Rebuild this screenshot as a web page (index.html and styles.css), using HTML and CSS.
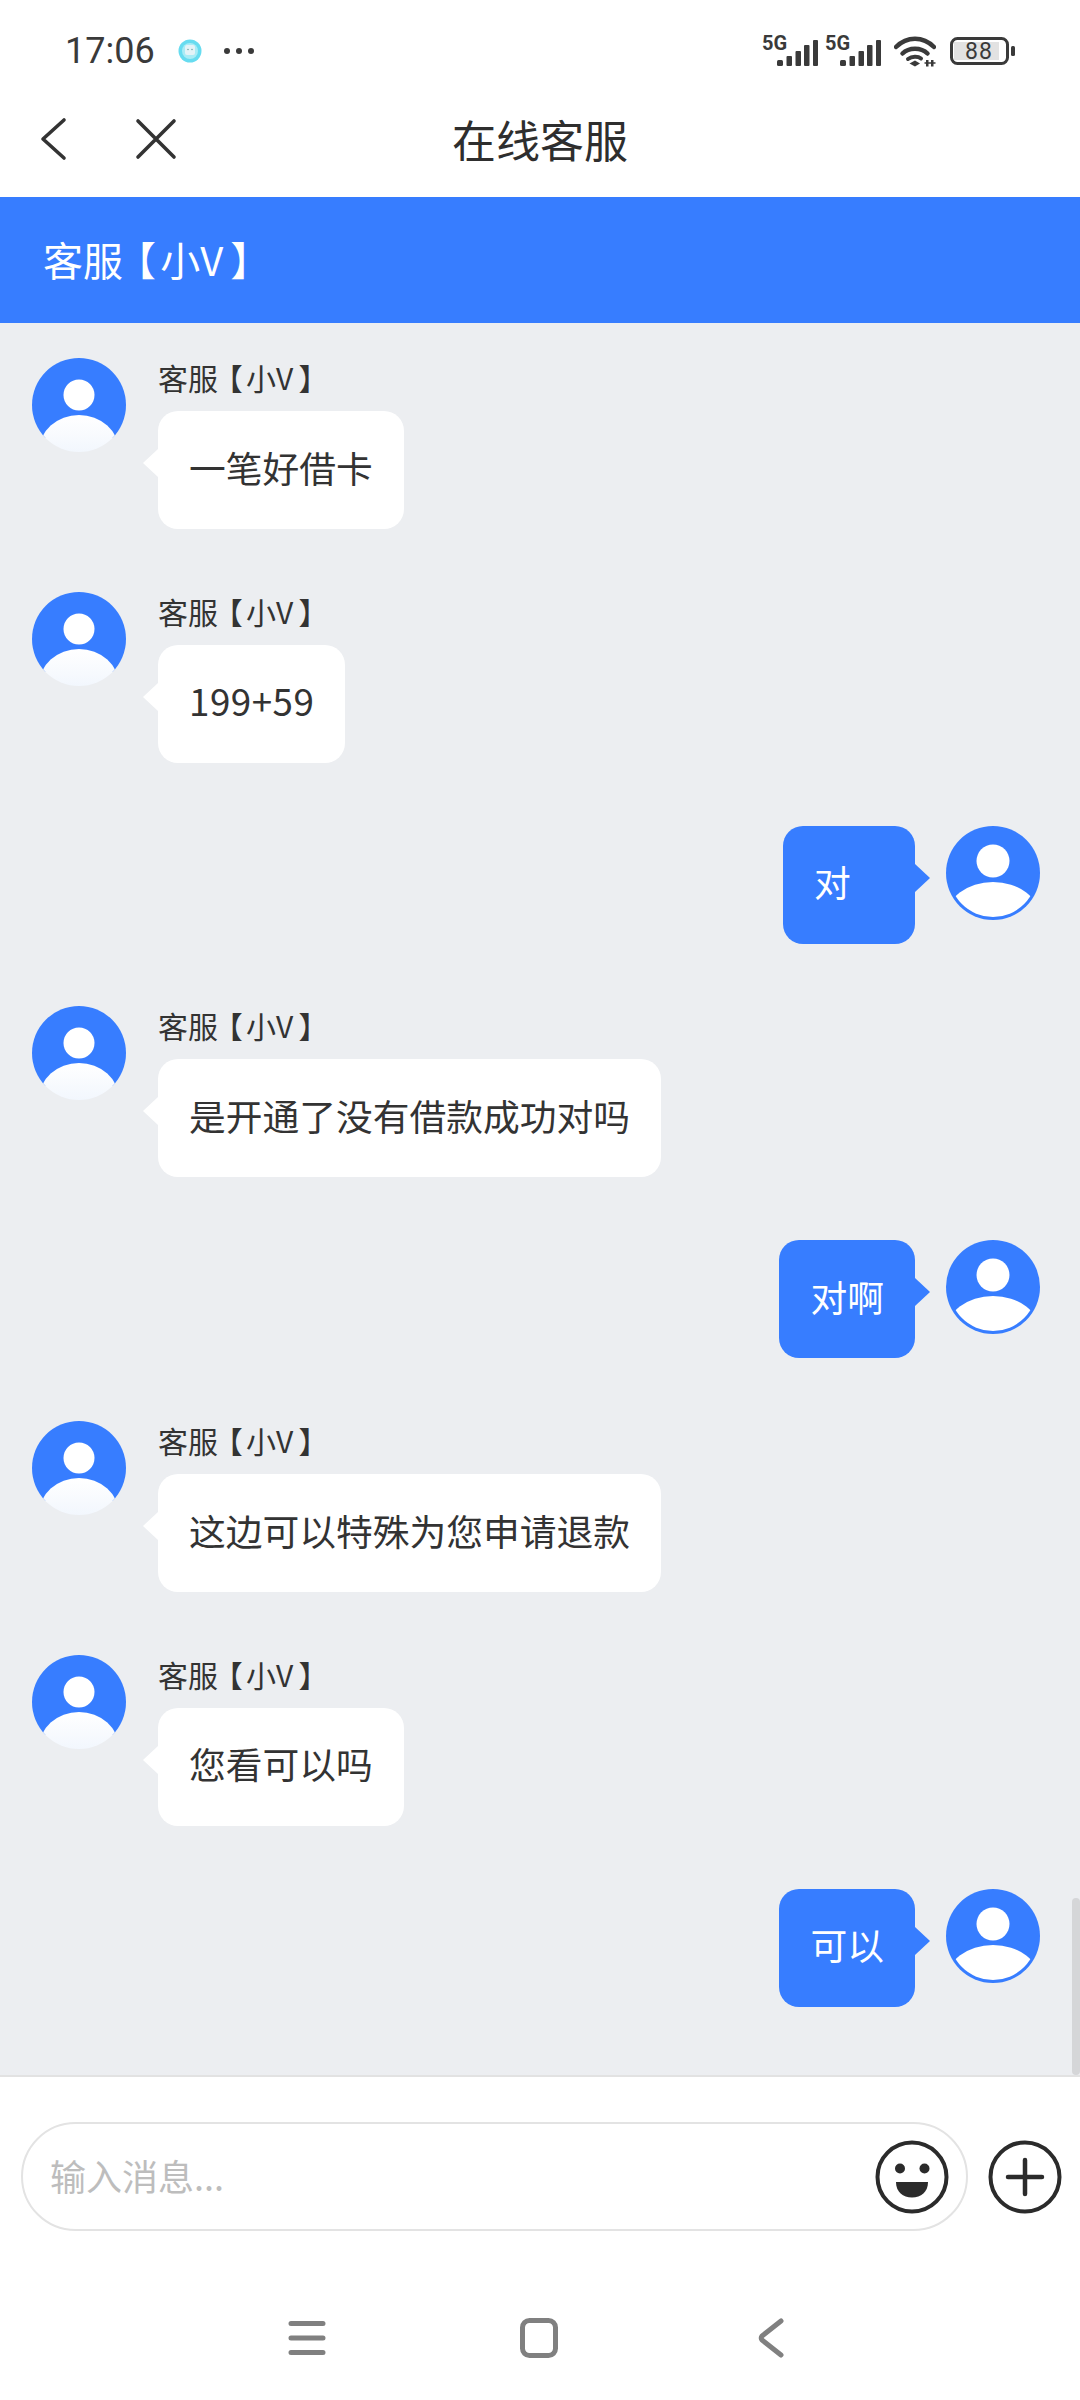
FILE: index.html
```html
<!DOCTYPE html>
<html lang="zh-CN">
<head>
<meta charset="utf-8">
<title>在线客服</title>
<link rel="stylesheet" href="styles.css">
</head>
<body>
<svg class="defs" width="0" height="0" aria-hidden="true">
  <defs>
    <linearGradient id="fade" x1="0" y1="0" x2="0" y2="1">
      <stop offset="0" stop-color="#ffffff"/>
      <stop offset="1" stop-color="#e6effc"/>
    </linearGradient>
    <clipPath id="clipOuter"><circle cx="47" cy="47" r="47"/></clipPath>
    <clipPath id="clipTop"><rect x="0" y="0" width="94" height="80"/></clipPath>
    <clipPath id="clipInner"><circle cx="47" cy="47" r="44"/></clipPath>
    <symbol id="agent" viewBox="0 0 94 94">
      <circle cx="47" cy="47" r="47" fill="#377dff" clip-path="url(#clipTop)"/>
      <circle cx="47" cy="37" r="15.5" fill="#fff"/>
      <ellipse cx="47" cy="93" rx="40" ry="36" fill="url(#fade)" clip-path="url(#clipOuter)"/>
    </symbol>
    <symbol id="user" viewBox="0 0 94 94">
      <circle cx="47" cy="47" r="47" fill="#377dff"/>
      <circle cx="47" cy="35" r="16.5" fill="#fff"/>
      <ellipse cx="47" cy="92" rx="47" ry="36" fill="#fff" clip-path="url(#clipInner)"/>
    </symbol>
    <symbol id="signal" viewBox="0 0 57 32">
      <text x="0" y="15" class="sig-text">5G</text>
      <rect x="15" y="25" width="6" height="6" rx="1.5" fill="#3a3a3a"/>
      <rect x="24.5" y="21" width="5.5" height="10" rx="1" fill="#3a3a3a"/>
      <rect x="33.5" y="16" width="5.5" height="15" rx="1" fill="#3a3a3a"/>
      <rect x="42" y="10" width="5.5" height="21" rx="1" fill="#3a3a3a"/>
      <rect x="51" y="5" width="5" height="26" rx="1" fill="#3a3a3a"/>
    </symbol>
  </defs>
</svg>

<div class="status">
  <span class="time">17:06</span>
  <svg class="app-dot" width="24" height="24" viewBox="0 0 24 24">
    <circle cx="12" cy="12" r="11.5" fill="#67dcf0"/>
    <circle cx="12" cy="12" r="8" fill="#a9ecf6"/>
    <rect x="7" y="6" width="10" height="10" rx="2" fill="#e3f3f7"/>
    <circle cx="10" cy="10.5" r="0.8" fill="#7aa"/>
    <circle cx="14" cy="10.5" r="0.8" fill="#7aa"/>
  </svg>
  <svg class="dots" width="32" height="8" viewBox="0 0 32 8">
    <circle cx="4" cy="4" r="3" fill="#3a3a3a"/>
    <circle cx="16" cy="4" r="3" fill="#3a3a3a"/>
    <circle cx="28" cy="4" r="3" fill="#3a3a3a"/>
  </svg>
  <div class="status-right">
    <svg width="57" height="32"><use href="#signal"/></svg>
    <svg width="57" height="32"><use href="#signal"/></svg>
    <svg class="wifi" width="42" height="32" viewBox="0 0 42 32">
      <path d="M2 12 C13 1 29 1 40 12" fill="none" stroke="#3a3a3a" stroke-width="4.5" stroke-linecap="round"/>
      <path d="M8.5 18.5 C15 12 27 12 33.5 18.5" fill="none" stroke="#3a3a3a" stroke-width="4.5" stroke-linecap="round"/>
      <path d="M14 24 C18 21 24 21 27 23.5" fill="none" stroke="#3a3a3a" stroke-width="4" stroke-linecap="round"/>
      <path d="M15.5 28.5 L21 25.5 L26 28.5 L21 31.5 Z" fill="#3a3a3a"/>
      <rect x="32" y="25" width="2.5" height="6.5" fill="#3a3a3a"/>
      <rect x="37" y="25" width="2.5" height="6.5" fill="#3a3a3a"/>
      <path d="M30.5 28 H36 M36 28 H41.5" stroke="#3a3a3a" stroke-width="1.5"/>
    </svg>
    <svg class="battery" width="66" height="30" viewBox="0 0 66 30">
      <rect x="1.5" y="2.5" width="56" height="25" rx="6" fill="#fff" stroke="#3a3a3a" stroke-width="3"/>
      <rect x="4" y="6" width="45" height="18" fill="#e2e2e2"/>
      <rect x="61" y="10" width="4" height="10" rx="1.5" fill="#3a3a3a"/>
      <text x="29" y="23" class="bat-text" text-anchor="middle">88</text>
    </svg>
  </div>
</div>

<header class="nav">
  <div class="nav-left">
    <svg width="30" height="44" viewBox="0 0 30 44">
      <path d="M25 3 L4 22 L25 41" fill="none" stroke="#333" stroke-width="3.6" stroke-linecap="round" stroke-linejoin="round"/>
    </svg>
    <svg width="44" height="44" viewBox="0 0 44 44">
      <path d="M4 4 L40 40 M40 4 L4 40" fill="none" stroke="#333" stroke-width="3.6" stroke-linecap="round"/>
    </svg>
  </div>
  <h1 class="nav-title">在线客服</h1>
  <div></div>
</header>

<div class="agent-bar">客服<span class="bl">【</span>小V<span class="br">】</span></div>

<main class="chat">
  <div class="row">
    <svg class="avatar"><use href="#agent"/></svg>
    <div class="body">
      <div class="name">客服<span class="bl">【</span>小V<span class="br">】</span></div>
      <div class="bubble in">一笔好借卡</div>
    </div>
  </div>
  <div class="row">
    <svg class="avatar"><use href="#agent"/></svg>
    <div class="body">
      <div class="name">客服<span class="bl">【</span>小V<span class="br">】</span></div>
      <div class="bubble in num">199+59</div>
    </div>
  </div>
  <div class="row me">
    <div class="bubble out">对</div>
    <svg class="avatar"><use href="#user"/></svg>
  </div>
  <div class="row">
    <svg class="avatar"><use href="#agent"/></svg>
    <div class="body">
      <div class="name">客服<span class="bl">【</span>小V<span class="br">】</span></div>
      <div class="bubble in">是开通了没有借款成功对吗</div>
    </div>
  </div>
  <div class="row me">
    <div class="bubble out">对啊</div>
    <svg class="avatar"><use href="#user"/></svg>
  </div>
  <div class="row">
    <svg class="avatar"><use href="#agent"/></svg>
    <div class="body">
      <div class="name">客服<span class="bl">【</span>小V<span class="br">】</span></div>
      <div class="bubble in">这边可以特殊为您申请退款</div>
    </div>
  </div>
  <div class="row">
    <svg class="avatar"><use href="#agent"/></svg>
    <div class="body">
      <div class="name">客服<span class="bl">【</span>小V<span class="br">】</span></div>
      <div class="bubble in">您看可以吗</div>
    </div>
  </div>
  <div class="row me">
    <div class="bubble out">可以</div>
    <svg class="avatar"><use href="#user"/></svg>
  </div>
  <div class="scrollbar"></div>
</main>

<footer class="composer">
  <div class="input">
    <span class="placeholder">输入消息...</span>
    <svg width="74" height="74" viewBox="0 0 74 74">
      <circle cx="37" cy="37" r="34.5" fill="none" stroke="#2b2b2b" stroke-width="4"/>
      <circle cx="25" cy="28.5" r="5" fill="#2b2b2b"/>
      <circle cx="49.5" cy="28.5" r="5" fill="#2b2b2b"/>
      <path d="M21 42 H53 C53 52 46 57.5 37 57.5 C28 57.5 21 52 21 42 Z" fill="#2b2b2b"/>
    </svg>
  </div>
  <svg width="74" height="74" viewBox="0 0 74 74">
    <circle cx="37" cy="37" r="34.5" fill="none" stroke="#2b2b2b" stroke-width="4"/>
    <path d="M20 37 H54 M37 20 V54" stroke="#2b2b2b" stroke-width="4.5" stroke-linecap="round"/>
  </svg>
</footer>

<nav class="softkeys">
  <div class="key">
    <svg width="38" height="36" viewBox="0 0 38 36">
      <path d="M3 3.5 H35 M3 18 H35 M3 32.5 H35" stroke="#808080" stroke-width="5" stroke-linecap="round"/>
    </svg>
  </div>
  <div class="key">
    <svg width="38" height="40" viewBox="0 0 38 40">
      <rect x="2.5" y="2.5" width="33" height="35" rx="7" fill="none" stroke="#808080" stroke-width="5"/>
    </svg>
  </div>
  <div class="key">
    <svg width="26" height="40" viewBox="0 0 26 40">
      <path d="M23 3 L4 18 Q2.5 20 4 22 L23 37" fill="none" stroke="#808080" stroke-width="5" stroke-linecap="round"/>
    </svg>
  </div>
</nav>
</body>
</html>
```

FILE: styles.css
```css
* { box-sizing: border-box; }
html, body { margin: 0; padding: 0; }
body {
  width: 1080px;
  height: 2400px;
  display: flex;
  flex-direction: column;
  background: #fff;
  color: #333;
  font-family: "Noto Sans CJK SC", "Noto Sans", sans-serif;
  overflow: hidden;
}
.defs { position: absolute; }
.sig-text { font: 700 20px "Roboto", sans-serif; fill: #3a3a3a; }
.bat-text { font: 400 23px "Roboto", sans-serif; fill: #3a3a3a; letter-spacing: 1px; }

.bl, .br { font-feature-settings: "palt" 1; }
.bl { margin: 0 .13em 0 .3em; }
.br { margin-left: .2em; }

.status {
  height: 80px;
  flex: none;
  display: flex;
  align-items: center;
  padding: 21px 64px 0 65px;
}
.time { font: 400 36px/1 "Roboto", sans-serif; color: #3a3a3a; }
.app-dot { margin-left: 23px; }
.dots { margin-left: 21px; }
.status-right { margin-left: auto; display: flex; align-items: center; gap: 6px; }
.wifi { margin-left: 6px; }
.battery { margin-left: 8px; }

.nav {
  height: 117px;
  flex: none;
  display: grid;
  grid-template-columns: 1fr auto 1fr;
  align-items: center;
}
.nav-left { display: flex; align-items: center; gap: 65px; padding-left: 39px; }
.nav-title { margin: 0; font-size: 44px; font-weight: 400; color: #2e2e2e; line-height: 1; }

.agent-bar {
  height: 126px;
  flex: none;
  display: flex;
  align-items: center;
  padding: 0 0 2px 43px;
  background: #377dff;
  color: #fff;
  font-size: 40px;
}

.chat {
  position: relative;
  flex: 1;
  padding: 35px 39px 0 32px;
  background: #eceef1;
  display: flex;
  flex-direction: column;
  gap: 62.8px;
  overflow: hidden;
}
.row { display: flex; gap: 32px; align-items: flex-start; }
.row.me { justify-content: flex-end; gap: 31px; margin-right: 1px; }
.avatar { width: 94px; height: 94px; flex: none; }
.body { display: flex; flex-direction: column; align-items: flex-start; }
.name { font-size: 30px; line-height: 38px; margin-bottom: 15px; color: #333; }

.bubble {
  position: relative;
  height: 118px;
  min-width: 132px;
  padding: 0 31px 6px;
  border-radius: 20px;
  display: flex;
  align-items: center;
  font-size: 36.75px;
  line-height: 1;
}
.num { letter-spacing: .5px; }
.bubble::after {
  content: "";
  position: absolute;
  top: 38px;
  border-style: solid;
  border-width: 14px 15px;
  border-color: transparent;
}
.bubble.in { background: #fff; color: #333; }
.bubble.in::after { left: -30px; border-right-color: #fff; }
.bubble.out { background: #377dff; color: #fff; }
.bubble.out::after { right: -30px; border-left-color: #377dff; }

.scrollbar {
  position: absolute;
  right: 0;
  bottom: 0;
  width: 8px;
  height: 177px;
  border-radius: 4px;
  background: #d5d6d8;
}

.composer {
  height: 203px;
  flex: none;
  border-top: 2px solid #e2e2e2;
  display: flex;
  align-items: flex-start;
  padding: 45px 18px 0 21px;
  gap: 20px;
}
.composer > svg { margin-top: 18px; }
.input {
  flex: 1;
  height: 109px;
  border: 2px solid #e3e3e3;
  border-radius: 55px;
  display: flex;
  align-items: center;
  justify-content: space-between;
  padding: 0 17px 0 27px;
}
.placeholder { font-size: 36px; color: #bdbdbd; padding-bottom: 3px; }

.softkeys {
  height: 122px;
  flex: none;
  display: flex;
  padding: 0 0 2px 191px;
  align-items: center;
}
.key { width: 232px; display: flex; justify-content: center; }
```
